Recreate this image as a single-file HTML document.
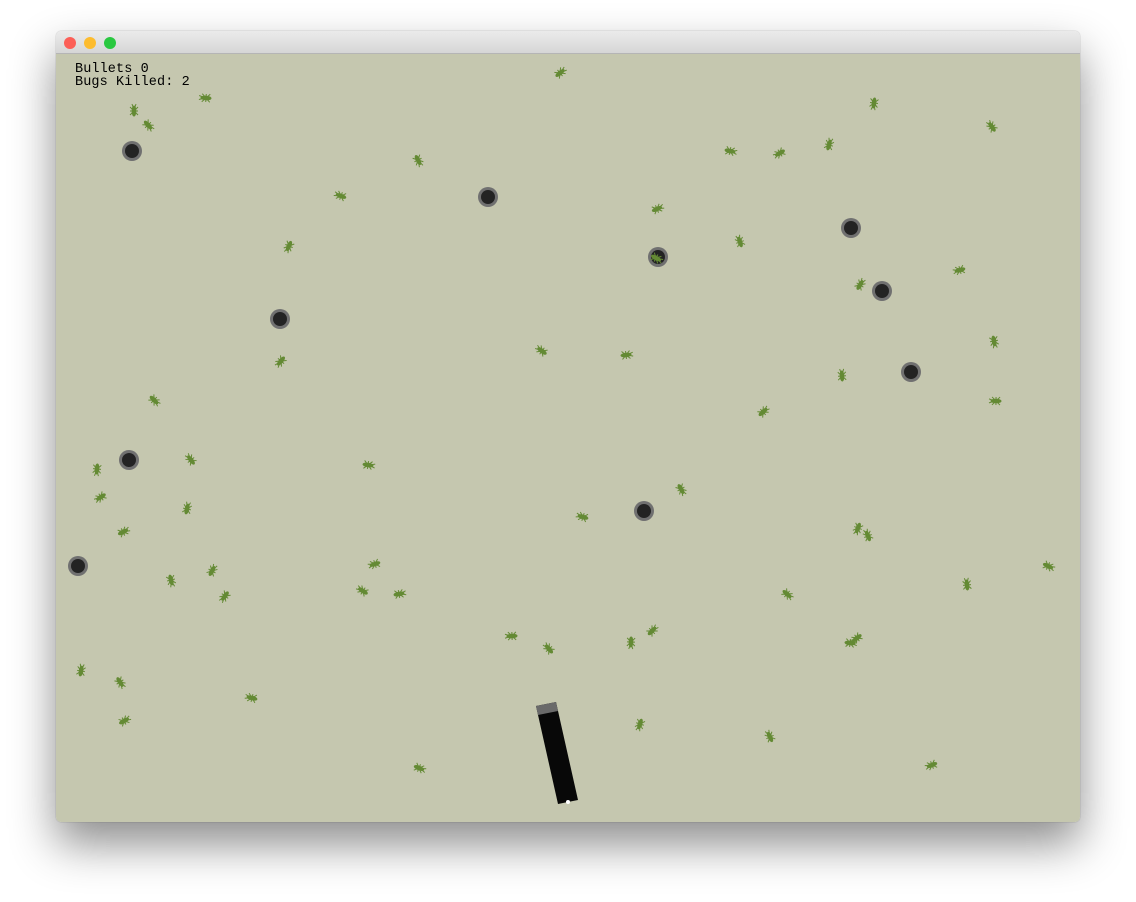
<!DOCTYPE html>
<html><head><meta charset="utf-8"><style>
html,body{margin:0;padding:0;width:1136px;height:902px;background:#fff;overflow:hidden}
.win{position:absolute;left:56px;top:31px;width:1024px;height:791px;border-radius:5px;overflow:hidden;box-shadow:0 22px 45px rgba(0,0,0,0.45),0 0 1px rgba(0,0,0,0.4)}
.tb{height:22px;background:linear-gradient(#ebebeb,#d6d6d6);border-bottom:1px solid #b5b5b5;position:relative}
.d{position:absolute;top:6px;width:12px;height:12px;border-radius:50%}
.c{position:absolute;top:23px;left:0;width:1024px;height:768px;background:#c5c7af}
.t{position:absolute;left:19px;top:9px;font:13.5px/13px "Liberation Mono",monospace;color:#000;letter-spacing:0.1px}
svg{position:absolute;left:0;top:0}
</style></head><body>
<div class="win">
<div class="tb"><div class="d" style="left:8px;background:#fc5f57"></div><div class="d" style="left:28px;background:#fdbc2e"></div><div class="d" style="left:48px;background:#29c840"></div></div>
<div class="c">
<svg width="1024" height="768" viewBox="56 54 1024 768">
<defs>
<g id="b" stroke="#648a34" stroke-width="1" fill="#648a34">
<ellipse cx="0" cy="0" rx="1.8" ry="5"/>
<path d="M-4,-4L4,4M4,-4L-4,4M-4,0L4,0M-2,-7L-1,-4M2,-7L1,-4" fill="none"/>
</g>
<g id="h"><circle r="10" fill="#707070"/><circle r="7" fill="#232323"/></g>
</defs>
<use href="#h" x="132" y="151"/><use href="#h" x="488" y="197"/><use href="#h" x="851" y="228"/><use href="#h" x="658" y="257"/><use href="#h" x="882" y="291"/><use href="#h" x="280" y="319"/><use href="#h" x="911" y="372"/><use href="#h" x="129" y="460"/><use href="#h" x="644" y="511"/><use href="#h" x="78" y="566"/>
<g id="bugs"></g>
<polygon points="536,706 556,702 578,800 558,804" fill="#080808"/>
<polygon points="536,706 556,702 558,711 538,715" fill="#6a6a6a"/>
<circle cx="568" cy="802" r="2" fill="#fff"/>
</svg>
<div class="t">Bullets 0<br>Bugs Killed: 2</div>
</div></div>
<script>
var p=[[134,111],[148,125],[206,98],[560,73],[874,103],[992,127],[730,151],[780,153],[829,145],[418,160],[341,196],[657,209],[289,246],[740,242],[656,258],[960,270],[860,285],[994,341],[542,351],[626,355],[281,361],[842,376],[154,400],[996,401],[763,412],[97,469],[191,460],[368,465],[101,497],[187,509],[681,489],[583,517],[123,532],[858,528],[868,536],[1048,566],[375,564],[212,571],[171,580],[363,591],[399,594],[225,596],[967,585],[787,594],[512,636],[652,631],[631,642],[549,649],[850,643],[857,638],[81,671],[120,682],[252,698],[124,721],[640,724],[770,737],[419,768],[932,765]];
var g=document.getElementById('bugs'),s='';
p.forEach(function(q,i){var a=(i*137)%360;s+='<use href="#b" transform="translate('+q[0]+','+q[1]+') rotate('+a+')"/>';});
g.innerHTML=s;
</script>
</body></html>
